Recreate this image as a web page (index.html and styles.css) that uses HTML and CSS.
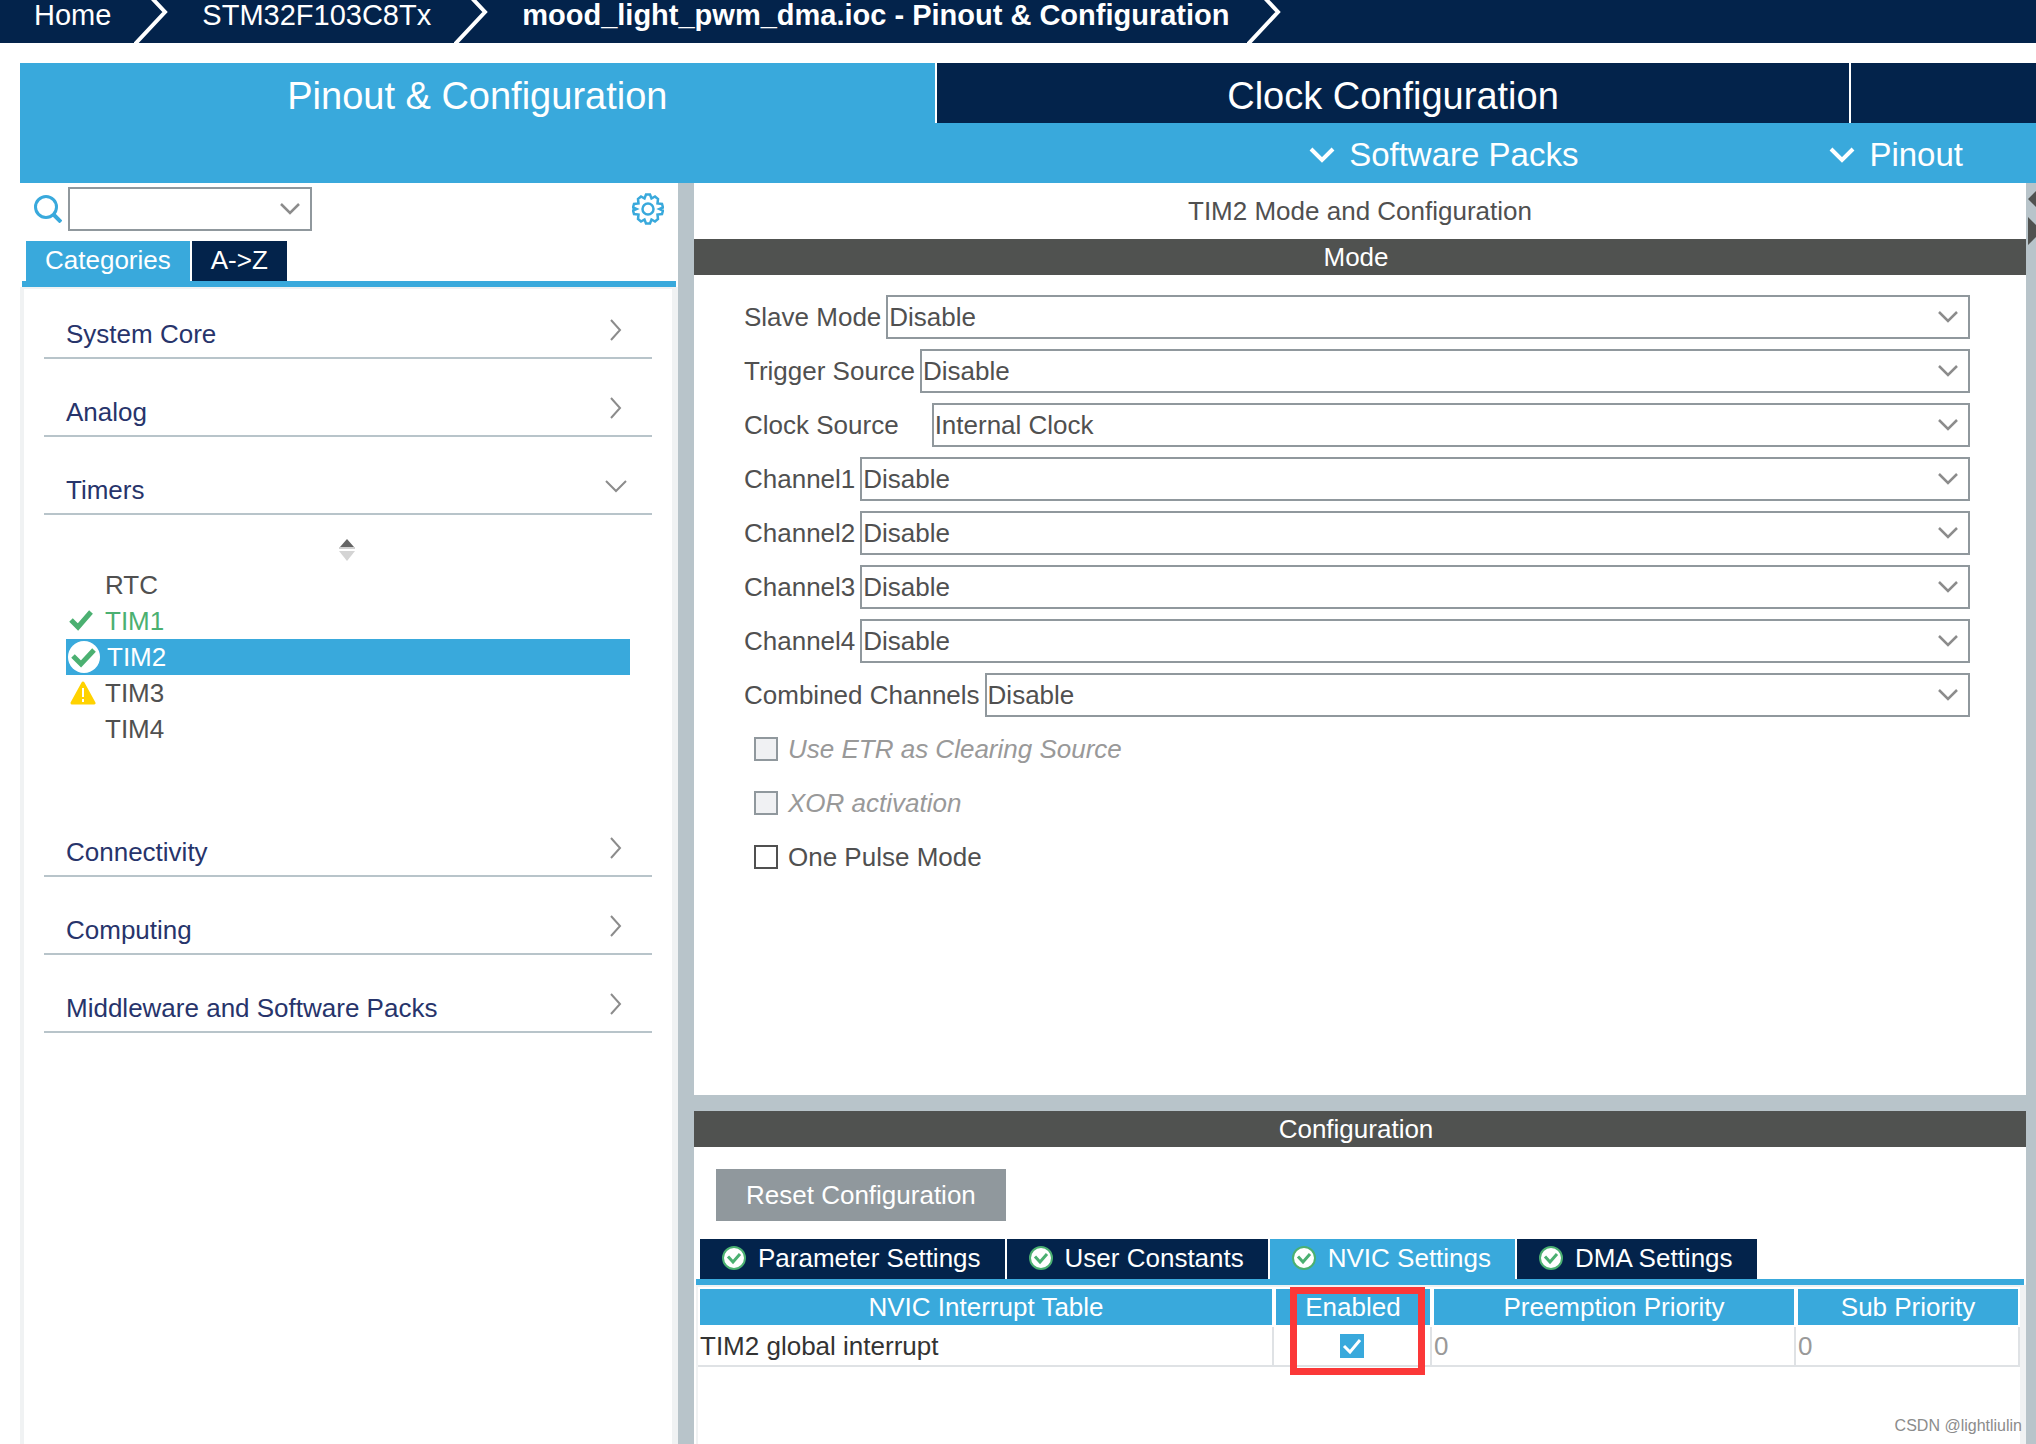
FILE: index.html
```html
<!DOCTYPE html>
<html lang="en">
<head>
<meta charset="utf-8">
<title>Pinout &amp; Configuration</title>
<link rel="stylesheet" href="styles.css">
</head>
<body>
<svg class="sprite" aria-hidden="true">
  <symbol id="i-right" viewBox="0 0 24 28"><path d="M7 4l9 10-9 10" fill="none" stroke="#8c8c8c" stroke-width="2"/></symbol>
  <symbol id="i-down" viewBox="0 0 24 28"><path d="M2 9l10 10 10-10" fill="none" stroke="#8c8c8c" stroke-width="2"/></symbol>
  <symbol id="i-combo" viewBox="0 0 20 12"><path d="M1 1l9 9 9-9" fill="none" stroke="#8c8c8c" stroke-width="2.500"/></symbol>
  <symbol id="i-menu" viewBox="0 0 26 16"><path d="M2 2l11 11L24 2" fill="none" stroke="#fff" stroke-width="4"/></symbol>
  <symbol id="i-crumb" viewBox="0 0 34 43"><path d="M16-4l15 16L1 44" fill="none" stroke="#fff" stroke-width="4"/></symbol>
  <symbol id="i-ok" viewBox="0 0 24 24"><circle cx="12" cy="12" r="11" fill="#fff" stroke="#4bb071" stroke-width="2"/><path d="M6 10.500l5 5.500 7-8" fill="none" stroke="#4bb071" stroke-width="3"/></symbol>
</svg>

<nav class="crumbs" aria-label="Breadcrumb">
  <a href="#">Home</a><svg class="crumb-arrow"><use href="#i-crumb"/></svg>
  <a href="#">STM32F103C8Tx</a><svg class="crumb-arrow"><use href="#i-crumb"/></svg>
  <a href="#" class="current">mood_light_pwm_dma.ioc - Pinout &amp; Configuration</a><svg class="crumb-arrow"><use href="#i-crumb"/></svg>
</nav>

<header class="project">
  <div class="project-tabs">
    <button class="project-tab active">Pinout &amp; Configuration</button>
    <button class="project-tab">Clock Configuration</button>
    <button class="project-tab" aria-label="Project Manager"></button>
  </div>
  <div class="menus">
    <button class="menu"><svg><use href="#i-menu"/></svg>Software Packs</button>
    <button class="menu"><svg><use href="#i-menu"/></svg>Pinout</button>
  </div>
</header>

<main class="workspace">
  <aside class="sidebar">
    <div class="search">
      <svg class="search-icon" viewBox="0 0 28 28"><circle cx="12" cy="12" r="10.500" fill="none" stroke="#39a9dc" stroke-width="3"/><path d="M19 19l8 8" stroke="#39a9dc" stroke-width="4"/></svg>
      <span class="combo search-combo"><select aria-label="Search"><option></option></select><svg><use href="#i-combo"/></svg></span>
      <button class="gear" aria-label="Settings">
        <svg viewBox="0 0 32 32" fill="none" stroke="#39a9dc" stroke-width="2.500"><circle cx="16" cy="16" r="5.500"/><path d="M14 1.500h4l1.500 4 3.500-2 3 2.500-.500 4.500 4.500.500 1 3.500-3.500 1.500 3.500 1.500-1 3.500-4.500.500.500 4.500-3 2.500-3.500-2-1.500 4h-4l-1.500-4-3.500 2-3-2.500.500-4.500-4.500-.500-1-3.500L4.500 16 1 14.500 2 11l4.500-.500L6 6l3-2.500 3.500 2z"/></svg>
      </button>
    </div>
    <div class="tabs side-tabs">
      <button class="tab active">Categories</button>
      <button class="tab">A-&gt;Z</button>
    </div>
    <div class="rule side-rule"></div>
    <div class="side-frame">
      <button class="category">System Core<svg><use href="#i-right"/></svg></button>
      <button class="category">Analog<svg><use href="#i-right"/></svg></button>
      <button class="category">Timers<svg><use href="#i-down"/></svg></button>
      <div class="peripherals">
        <button class="sorter" aria-label="Sort"><svg viewBox="0 0 16 22"><path d="M8 0l7 8H1z" fill="#646464"/><path d="M0 8h16v2H0z" fill="#d0d0d0"/><path d="M0 12h16l-8 10z" fill="#d4d4d4"/></svg></button>
        <ul>
          <li><button class="item"><span class="mark"></span>RTC</button></li>
          <li><button class="item ok"><svg class="mark" viewBox="0 0 28 32"><path d="M3 15l7 7L23 7" fill="none" stroke="#4bb071" stroke-width="5"/></svg>TIM1</button></li>
          <li><button class="item selected"><svg class="mark" viewBox="0 0 32 32"><circle cx="16" cy="16" r="16" fill="#fff"/><path d="M5 15l8 8L26 9" fill="none" stroke="#4bb071" stroke-width="5"/></svg>TIM2</button></li>
          <li><button class="item"><svg class="mark" viewBox="0 0 28 32"><path d="M15 6l11 20H4z" fill="#ffd200" stroke="#ffd200" stroke-width="3" stroke-linejoin="round"/><path d="M15 11v9M15 22v3" stroke="#fff" stroke-width="2"/></svg>TIM3</button></li>
          <li><button class="item"><span class="mark"></span>TIM4</button></li>
        </ul>
      </div>
      <button class="category">Connectivity<svg><use href="#i-right"/></svg></button>
      <button class="category">Computing<svg><use href="#i-right"/></svg></button>
      <button class="category">Middleware and Software Packs<svg><use href="#i-right"/></svg></button>
    </div>
  </aside>
  <div class="splitter"></div>

  <section class="detail">
    <h1 class="title">TIM2 Mode and Configuration</h1>
    <h2 class="bar">Mode</h2>
    <form class="mode">
      <div class="field"><label for="f1">Slave Mode</label><span class="combo"><select id="f1"><option>Disable</option></select><svg><use href="#i-combo"/></svg></span></div>
      <div class="field"><label for="f2">Trigger Source</label><span class="combo"><select id="f2"><option>Disable</option></select><svg><use href="#i-combo"/></svg></span></div>
      <div class="field"><label for="f3" class="wide">Clock Source</label><span class="combo"><select id="f3"><option>Internal Clock</option></select><svg><use href="#i-combo"/></svg></span></div>
      <div class="field"><label for="f4">Channel1</label><span class="combo"><select id="f4"><option>Disable</option></select><svg><use href="#i-combo"/></svg></span></div>
      <div class="field"><label for="f5">Channel2</label><span class="combo"><select id="f5"><option>Disable</option></select><svg><use href="#i-combo"/></svg></span></div>
      <div class="field"><label for="f6">Channel3</label><span class="combo"><select id="f6"><option>Disable</option></select><svg><use href="#i-combo"/></svg></span></div>
      <div class="field"><label for="f7">Channel4</label><span class="combo"><select id="f7"><option>Disable</option></select><svg><use href="#i-combo"/></svg></span></div>
      <div class="field"><label for="f8">Combined Channels</label><span class="combo"><select id="f8"><option>Disable</option></select><svg><use href="#i-combo"/></svg></span></div>
      <div class="check disabled"><input type="checkbox" id="c1" disabled><label for="c1">Use ETR as Clearing Source</label></div>
      <div class="check disabled"><input type="checkbox" id="c2" disabled><label for="c2">XOR activation</label></div>
      <div class="check"><input type="checkbox" id="c3"><label for="c3">One Pulse Mode</label></div>
    </form>
    <div class="divider"></div>
    <h2 class="bar">Configuration</h2>
    <button class="reset">Reset Configuration</button>
    <div class="tabs config-tabs">
      <button class="tab"><svg><use href="#i-ok"/></svg>Parameter Settings</button>
      <button class="tab"><svg><use href="#i-ok"/></svg>User Constants</button>
      <button class="tab active"><svg><use href="#i-ok"/></svg>NVIC Settings</button>
      <button class="tab"><svg><use href="#i-ok"/></svg>DMA Settings</button>
    </div>
    <div class="rule config-rule"></div>
    <div class="config-frame">
      <table class="nvic">
        <colgroup><col><col class="col-enabled"><col class="col-preemption"><col class="col-sub"></colgroup>
        <thead>
          <tr><th>NVIC Interrupt Table</th><th class="marked">Enabled<span class="highlight"></span></th><th>Preemption Priority</th><th>Sub Priority</th></tr>
        </thead>
        <tbody>
          <tr><td>TIM2 global interrupt</td><td class="center"><input type="checkbox" aria-label="Enabled" checked></td><td class="muted">0</td><td class="muted">0</td></tr>
        </tbody>
      </table>
    </div>
  </section>

  <div class="edge"><svg viewBox="0 0 8 64"><path d="M0 16l8-8v16zM0 34l8 8v12l-8 8z" fill="#505250"/></svg></div>
</main>
<p class="watermark">CSDN @lightliulin</p>
</body>
</html>
```
FILE: styles.css
```css
* { box-sizing: border-box; }

:root {
  --navy: #03234b;
  --blue: #39a9dc;
  --steel: #b8c4ca;
  --line: #90989d;
  --text: #505050;
  --frame: #f0f2f3;
}

body {
  margin: 0;
  min-height: 100vh;
  display: flex;
  flex-direction: column;
  position: relative;
  background: #fff;
  color: var(--text);
  font: 26px/36px "Liberation Sans", Arial, sans-serif;
}

button, select {
  font: inherit;
  color: inherit;
  border: 0;
  border-radius: 0;
  background: none;
  padding: 0;
  margin: 0;
}

.sprite { position: absolute; width: 0; height: 0; }

/* Breadcrumb */
.crumbs {
  display: flex;
  height: 43px;
  background: var(--navy);
  overflow: hidden;
}
.crumbs a {
  color: #fff;
  text-decoration: none;
  font-size: 29px;
  line-height: 30px;
  padding: 0 23px 0 34px;
  white-space: nowrap;
}
.crumbs .current { font-weight: bold; padding-right: 18px; }
.crumb-arrow { width: 34px; height: 43px; flex: none; }

/* Project header */
.project { margin: 20px 0 0 20px; background: var(--blue); }
.project-tabs {
  display: grid;
  grid-template-columns: 49fr 49fr 10fr;
}
.project-tab {
  height: 60px;
  padding-top: 6px;
  background: var(--navy);
  color: #fff;
  font-size: 38px;
  border-left: 2px solid #fff;
}
.project-tab.active { background: var(--blue); border-left: 0; }
.menus {
  display: flex;
  justify-content: flex-end;
  gap: 251px;
  height: 60px;
  padding: 4px 73px 0 0;
}
.menu {
  display: flex;
  align-items: center;
  gap: 14px;
  color: #fff;
  font-size: 33px;
}
.menu svg { width: 26px; height: 16px; }

/* Workspace */
.workspace {
  flex: 1;
  display: grid;
  grid-template-columns: 658fr 16px 1332fr 10px;
  padding-left: 20px;
}
.splitter, .edge { background: var(--steel); }
.edge svg { display: block; width: 8px; height: 64px; margin-left: 2px; }

.sidebar { display: flex; flex-direction: column; }
.search {
  display: flex;
  align-items: center;
  gap: 6px;
  padding: 4px 14px 10px;
}
.search-icon { width: 28px; height: 28px; }
.gear { margin-left: auto; width: 32px; height: 32px; }
.gear svg { display: block; width: 32px; height: 32px; }

.combo { display: grid; align-items: center; flex: 1; }
.combo select {
  grid-area: 1 / 1;
  appearance: none;
  width: 100%;
  height: 44px;
  border: 2px solid var(--line);
  background: #fff;
  padding-left: 1px;
}
.combo svg {
  grid-area: 1 / 1;
  justify-self: end;
  width: 20px;
  height: 12px;
  margin-right: 12px;
  pointer-events: none;
}
.search-combo { flex: 0 0 244px; }

.tabs { display: flex; gap: 2px; }
.tab {
  display: flex;
  align-items: center;
  gap: 12px;
  height: 40px;
  padding: 0 24px 2px 22px;
  background: var(--navy);
  color: #fff;
}
.tab.active { background: var(--blue); }
.tab svg { width: 24px; height: 24px; }
.side-tabs { padding-left: 6px; }
.side-tabs .tab { padding: 0 19px 2px; }
.rule { height: 6px; background: var(--blue); }
.side-rule { margin: 0 2px; }

.side-frame {
  flex: 1;
  border: solid var(--frame);
  border-width: 2px 6px 0 4px;
  padding: 18px 20px 0;
}
.category {
  display: flex;
  align-items: center;
  justify-content: space-between;
  width: 100%;
  height: 52px;
  margin-bottom: 26px;
  padding: 4px 24px 0 22px;
  border-bottom: 2px solid var(--steel);
  color: #27346b;
}
.category svg { width: 24px; height: 28px; margin-bottom: 8px; }

.peripherals { padding: 0 22px 78px; margin-top: -2px; }
.sorter { display: block; width: 16px; height: 22px; margin: 0 auto 6px 273px; }
.sorter svg { display: block; width: 16px; height: 22px; }
.peripherals ul { list-style: none; margin: 0; padding: 0; }
.item {
  display: flex;
  align-items: center;
  gap: 9px;
  width: 100%;
  height: 36px;
  padding-left: 2px;
}
.mark { width: 28px; height: 32px; }
.item.ok { color: #4bb071; }
.item.selected { background: var(--blue); color: #fff; gap: 7px; }
.selected .mark { width: 32px; }

/* Detail pane */
.detail { display: flex; flex-direction: column; min-width: 0; }
.title, .bar {
  margin: 0;
  font-size: 26px;
  font-weight: normal;
  text-align: center;
}
.title { padding: 10px 0; }
.bar { background: #505250; color: #fff; padding-right: 8px; }

.mode {
  display: flex;
  flex-direction: column;
  gap: 10px;
  padding: 20px 56px 216px 50px;
}
.field { display: flex; align-items: center; gap: 5px; }
.field .wide { margin-right: 28px; }
.check { display: flex; align-items: center; gap: 10px; height: 44px; padding-left: 10px; }
.check.disabled { color: #999; font-style: italic; }

input[type="checkbox"] {
  appearance: none;
  display: block;
  width: 24px;
  height: 24px;
  margin: 0;
  border: 2px solid var(--text);
  background: #fff;
}
input[type="checkbox"]:disabled { border-color: var(--line); background: #f0f1f3; }
input[type="checkbox"]:checked {
  border: 0;
  background: var(--blue) url("data:image/svg+xml,%3Csvg xmlns='http://www.w3.org/2000/svg' viewBox='0 0 24 24'%3E%3Cpath d='M4 12l6 6L20 6' fill='none' stroke='%23fff' stroke-width='3'/%3E%3C/svg%3E");
}

.divider { height: 16px; background: var(--steel); }
.reset {
  align-self: flex-start;
  height: 52px;
  margin: 22px 0 18px 22px;
  padding: 0 30px;
  background: var(--line);
  color: #fff;
}
.config-tabs { padding-left: 6px; }
.config-rule { margin: 0 2px; }
.config-frame {
  flex: 1;
  margin-left: 2px;
  border: solid var(--frame);
  border-width: 2px 6px 0 2px;
}

.nvic { width: 100%; table-layout: fixed; border-collapse: separate; border-spacing: 0; }
.col-enabled { width: 158px; }
.col-preemption { width: 364px; }
.col-sub { width: 224px; }
.nvic th {
  height: 40px;
  padding: 0;
  border: 2px solid #fff;
  background: var(--blue);
  color: #fff;
  font-weight: normal;
}
.nvic td {
  height: 40px;
  padding: 0 0 0 2px;
  border: solid #dfe2e5;
  border-width: 0 2px 2px 0;
  color: #333;
}
.nvic .muted { color: #999; }
.nvic .center { padding: 0; }
.nvic .center input { margin: 0 auto; }
.marked { position: relative; }
.highlight {
  position: absolute;
  top: -2px;
  right: 5px;
  width: 135px;
  height: 88px;
  border: 7px solid #fb3838;
}

.watermark {
  position: absolute;
  right: 14px;
  bottom: 8px;
  margin: 0;
  color: #8c8c8c;
  font-size: 16px;
  line-height: 20px;
}
```
